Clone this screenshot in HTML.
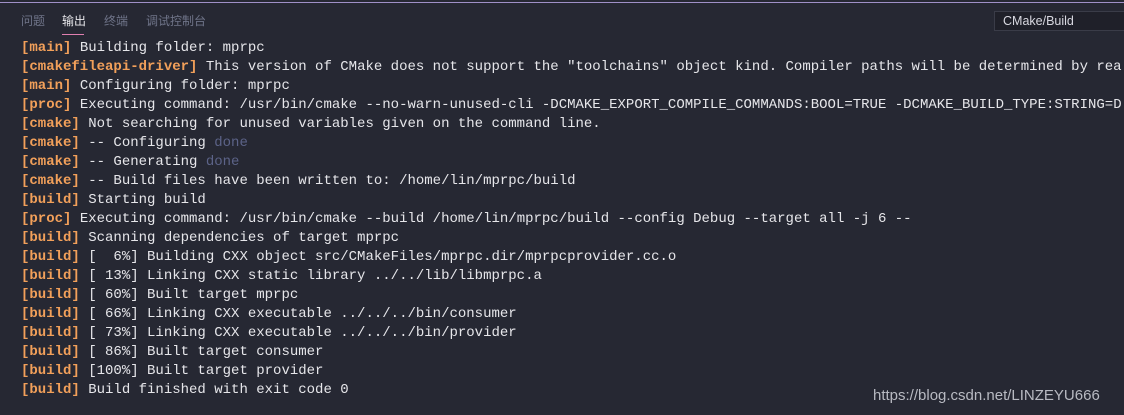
<!DOCTYPE html>
<html><head><meta charset="utf-8"><style>
body{margin:0;width:1124px;height:415px;background:#262833;overflow:hidden;position:relative;font-family:"Liberation Mono",monospace;}
.topline{position:absolute;top:2px;left:0;width:1124px;height:1px;background:#a090c8;}
.tabs{position:absolute;top:12px;left:21px;font-family:"Liberation Sans","Noto Sans CJK SC",sans-serif;font-size:12px;color:#6f7489;}
.tabs span{position:absolute;white-space:nowrap;}
.ul{position:absolute;left:62px;top:34px;width:22px;height:1px;background:#e07fb0;}
.dd{position:absolute;left:994px;top:11px;width:140px;height:20px;background:#1f2029;border:1px solid #3a3c48;box-sizing:border-box;font-family:"Liberation Sans",sans-serif;font-size:12.5px;color:#d8d8e0;padding-left:8px;line-height:18px;}
pre{position:absolute;left:21px;top:39px;margin:0;font-size:14px;line-height:19px;color:#e6e6ea;font-family:"Liberation Mono",monospace;white-space:pre;}
.t{color:#f2a05a;font-weight:bold;}
.d{color:#5c6388;}
.wm{position:absolute;left:873px;top:387px;font-family:"Liberation Sans",sans-serif;font-size:15px;color:#b8bac2;}
</style></head><body>
<div class="topline"></div>
<div class="tabs"><span style="left:0">问题</span><span style="left:41px;color:#e6e6ea">输出</span><span style="left:83px">终端</span><span style="left:125px">调试控制台</span></div>
<div class="ul"></div>
<div class="dd">CMake/Build</div>
<pre><span class="t">[main]</span> Building folder: mprpc
<span class="t">[cmakefileapi-driver]</span> This version of CMake does not support the "toolchains" object kind. Compiler paths will be determined by rea
<span class="t">[main]</span> Configuring folder: mprpc
<span class="t">[proc]</span> Executing command: /usr/bin/cmake --no-warn-unused-cli -DCMAKE_EXPORT_COMPILE_COMMANDS:BOOL=TRUE -DCMAKE_BUILD_TYPE:STRING=D
<span class="t">[cmake]</span> Not searching for unused variables given on the command line.
<span class="t">[cmake]</span> -- Configuring <span class="d">done</span>
<span class="t">[cmake]</span> -- Generating <span class="d">done</span>
<span class="t">[cmake]</span> -- Build files have been written to: /home/lin/mprpc/build
<span class="t">[build]</span> Starting build
<span class="t">[proc]</span> Executing command: /usr/bin/cmake --build /home/lin/mprpc/build --config Debug --target all -j 6 --
<span class="t">[build]</span> Scanning dependencies of target mprpc
<span class="t">[build]</span> [  6%] Building CXX object src/CMakeFiles/mprpc.dir/mprpcprovider.cc.o
<span class="t">[build]</span> [ 13%] Linking CXX static library ../../lib/libmprpc.a
<span class="t">[build]</span> [ 60%] Built target mprpc
<span class="t">[build]</span> [ 66%] Linking CXX executable ../../../bin/consumer
<span class="t">[build]</span> [ 73%] Linking CXX executable ../../../bin/provider
<span class="t">[build]</span> [ 86%] Built target consumer
<span class="t">[build]</span> [100%] Built target provider
<span class="t">[build]</span> Build finished with exit code 0</pre>
<div class="wm">https://blog.csdn.net/LINZEYU666</div>
</body></html>
